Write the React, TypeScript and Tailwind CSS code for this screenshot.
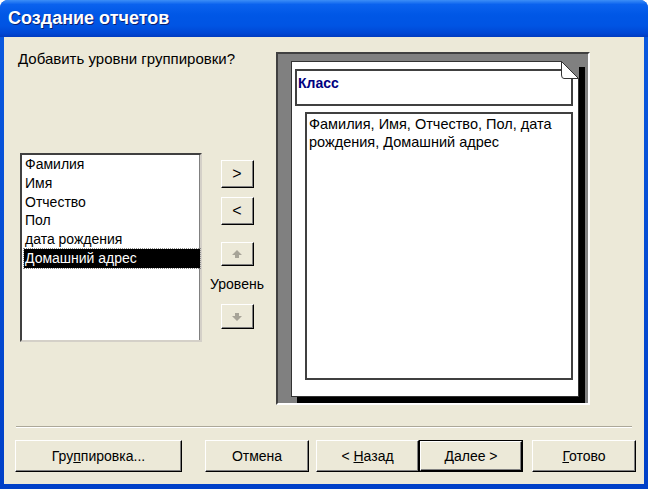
import React from 'react';

const fields = ['Фамилия', 'Имя', 'Отчество', 'Пол', 'дата рождения', 'Домашний адрес'];

// classic 3D push button
const Btn = ({
  children,
  className = '',
  def = false,
}: {
  children: React.ReactNode;
  className?: string;
  def?: boolean;
}) => (
  <div className={`${def ? 'border border-black' : ''} ${className}`}>
    <div className="flex h-full w-full items-center justify-center border border-b-black border-l-white border-r-black border-t-white bg-[#ECE9D8] shadow-[inset_-1px_-1px_0_#808080]">
      {children}
    </div>
  </div>
);

const ArrowUp = () => (
  <svg width="12" height="10" viewBox="0 0 12 10">
    <path d="M6 1 L11 6 L8 6 L8 9 L4 9 L4 6 L1 6 Z" fill="#a7a498" />
  </svg>
);

const ArrowDown = () => (
  <svg width="12" height="10" viewBox="0 0 12 10">
    <path d="M6 9 L11 4 L8 4 L8 1 L4 1 L4 4 L1 4 Z" fill="#a7a498" />
  </svg>
);

const App = () => {
  return (
    <div className="flex h-[489px] w-[648px] flex-col overflow-hidden rounded-t-[8px] bg-[linear-gradient(180deg,#0A5AE0,#0040C8)] font-['Liberation_Sans',Arial,sans-serif] text-[14px] text-black">
      {/* title bar */}
      <div className="flex h-[37px] shrink-0 items-center bg-[linear-gradient(180deg,#3C8EF7_0%,#0A62EE_12%,#0057E6_40%,#0054E3_70%,#0047D4_90%,#003BC0_100%)] pl-[8px]">
        <span className="text-[18px] font-bold text-white [text-shadow:1px_1px_0_#0a1e70]">
          Создание отчетов
        </span>
      </div>

      {/* window body */}
      <div className="mx-[4px] mb-[5px] flex flex-1 flex-col bg-[#ECE9D8]">
        <div className="flex h-[368px] pl-[14px]">
          {/* left column */}
          <div className="flex w-[187px] shrink-0 flex-col">
            <div className="mt-[13px] h-[18px] whitespace-nowrap text-[15px] leading-[18px]">
              Добавить уровни группировки?
            </div>
            <div className="ml-[2px] mt-[85px] h-[189px] w-[182px] border-2 border-b-[#d4d0c8] border-l-[#404040] border-r-[#d4d0c8] border-t-[#404040] bg-white">
              <div className="h-full w-full border-r border-[#808080] pl-[2px]">
                {fields.map((f, i) => (
                  <div
                    key={f}
                    className={`h-[18.8px] whitespace-nowrap pl-[1px] leading-[18.8px] ${
                      i === fields.length - 1
                        ? 'w-[176px] bg-black text-white outline-1 outline-dotted outline-[#888]'
                        : ''
                    }`}
                  >
                    {f}
                  </div>
                ))}
              </div>
            </div>
          </div>

          {/* move buttons */}
          <div className="flex w-[62px] shrink-0 flex-col items-center pl-[2px]">
            <Btn className="mt-[123px] h-[28px] w-[33px]">
              <span className="text-[16px]">&gt;</span>
            </Btn>
            <Btn className="mt-[9px] h-[28px] w-[33px]">
              <span className="text-[16px]">&lt;</span>
            </Btn>
            <Btn className="mt-[17px] h-[24px] w-[33px]">
              <ArrowUp />
            </Btn>
            <div className="mt-[9px] whitespace-nowrap leading-[18px]">Уровень</div>
            <Btn className="mt-[11px] h-[25px] w-[33px]">
              <ArrowDown />
            </Btn>
          </div>

          {/* preview */}
          <div className="ml-[9px] mt-[15px] h-[353px] w-[314px] shrink-0 border-2 border-b-white border-l-[#404040] border-r-white border-t-[#404040] bg-[#808080] pl-[13px] pt-[7px]">
            <div className="relative h-[336px] w-[288px] border border-[#333] bg-white pl-[3px] pt-[7px] shadow-[6px_6px_0_0_#000]">
              {/* folded corner */}
              <svg
                className="absolute right-[-1px] top-[-1px]"
                width="18"
                height="18"
                viewBox="0 0 18 18"
              >
                <path d="M0 0 L18 0 L18 18 Z" fill="#808080" />
                <path d="M0.5 0.5 L17.5 17.5 L3 17.5 Q0.5 17.5 0.5 14 Z" fill="#fff" stroke="#333" strokeWidth="1" />
              </svg>
              <div className="h-[37px] w-[278px] border-2 border-[#404040] pl-[1px] pt-[2px]">
                <span className="text-[14px] font-bold text-[#000080]">Класс</span>
              </div>
              <div className="ml-[10px] mt-[6px] h-[268px] w-[268px] border-2 border-[#404040] pl-[2px] pt-[1px] text-[14.5px] leading-[18px]">
                Фамилия, Имя, Отчество, Пол, дата рождения, Домашний адрес
              </div>
            </div>
          </div>
        </div>

        {/* separator */}
        <div className="ml-[12px] mt-[21px] w-[616px] border-b border-t border-b-white border-t-[#ACA899]" />

        {/* bottom buttons */}
        <div className="mt-[12px] flex h-[32px] pl-[11px]">
          <Btn className="w-[167px]">
            <span>
              Гру<span className="underline">п</span>пировка...
            </span>
          </Btn>
          <Btn className="ml-[23px] w-[104px]">Отмена</Btn>
          <Btn className="ml-[7px] w-[103px]">
            <span>
              &lt; <span className="underline">Н</span>азад
            </span>
          </Btn>
          <Btn def className="w-[104px]">
            <span>
              <span className="underline">Д</span>алее &gt;
            </span>
          </Btn>
          <Btn className="ml-[9px] w-[104px]">
            <span>
              <span className="underline">Г</span>отово
            </span>
          </Btn>
        </div>
      </div>
    </div>
  );
};

export default App;
